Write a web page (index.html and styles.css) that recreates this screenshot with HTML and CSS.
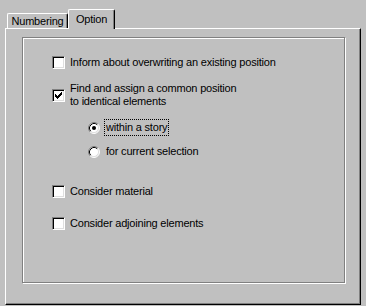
FILE: index.html
```html
<!DOCTYPE html>
<html lang="en">
  <head>
    <meta charset="UTF-8" />
    <title>Option</title>
    <link rel="stylesheet" href="styles.css">
  </head>
  <body>
    <div class="dialog">
      <div class="tabs">
        <div class="tab tab-numbering">Numbering</div>
        <div class="tab tab-active">Option</div>
      </div>

      <div class="panel">
        <div class="group">
          <div class="row row-first">
            <span class="check"></span>
            <span class="label">Inform about overwriting an existing position</span>
          </div>

          <div class="row row-find">
            <span class="check">
              <svg width="11" height="11" viewBox="0 0 11 11" shape-rendering="crispEdges">
                <rect x="2" y="4" width="1" height="3" />
                <rect x="3" y="5" width="1" height="3" />
                <rect x="4" y="6" width="1" height="3" />
                <rect x="5" y="5" width="1" height="3" />
                <rect x="6" y="4" width="1" height="3" />
                <rect x="7" y="3" width="1" height="3" />
                <rect x="8" y="2" width="1" height="3" />
              </svg>
            </span>
            <span class="label">Find and assign a common position<br />to identical elements</span>
          </div>

          <div class="row radio-row radio-first">
            <svg class="radio" width="12" height="12" viewBox="0 0 12 12">
              <circle cx="6" cy="6" r="5" fill="#fff" />
              <path d="M2.11 9.89 A5.5 5.5 0 0 1 9.89 2.11" fill="none" stroke="#808080" />
              <path d="M9.89 2.11 A5.5 5.5 0 0 1 2.11 9.89" fill="none" stroke="#fff" />
              <path d="M2.82 9.18 A4.5 4.5 0 0 1 9.18 2.82" fill="none" stroke="#000" />
              <path d="M9.18 2.82 A4.5 4.5 0 0 1 2.82 9.18" fill="none" stroke="#dfdfdf" />
              <circle cx="6" cy="6" r="2" fill="#000" />
            </svg>
            <span class="label focus">within a story</span>
          </div>

          <div class="row radio-row radio-second">
            <svg class="radio" width="12" height="12" viewBox="0 0 12 12">
              <circle cx="6" cy="6" r="5" fill="#fff" />
              <path d="M2.11 9.89 A5.5 5.5 0 0 1 9.89 2.11" fill="none" stroke="#808080" />
              <path d="M9.89 2.11 A5.5 5.5 0 0 1 2.11 9.89" fill="none" stroke="#fff" />
              <path d="M2.82 9.18 A4.5 4.5 0 0 1 9.18 2.82" fill="none" stroke="#000" />
              <path d="M9.18 2.82 A4.5 4.5 0 0 1 2.82 9.18" fill="none" stroke="#dfdfdf" />
            </svg>
            <span class="label plain">for current selection</span>
          </div>

          <div class="row row-material">
            <span class="check"></span>
            <span class="label">Consider material</span>
          </div>

          <div class="row row-adjoining">
            <span class="check"></span>
            <span class="label">Consider adjoining elements</span>
          </div>
        </div>
      </div>
    </div>
  </body>
</html>
```

FILE: styles.css
```css
* {
  box-sizing: border-box;
  margin: 0;
  padding: 0;
}

body {
  background-color: #c0c0c0;
  color: black;
  font-family: "Liberation Sans", Arial, sans-serif;
  font-size: 11px;
  line-height: 13px;
  letter-spacing: -0.2px;
  width: 366px;
  height: 306px;
  overflow: hidden;
}

.dialog {
  display: flex;
  flex-direction: column;
  height: 306px;
  padding: 9px 5px 1px 5px;
}

.tabs {
  display: flex;
  align-items: flex-end;
  height: 19px;
  padding-left: 2px;
}

.tab {
  height: 15px;
  border-left: 1px solid #fff;
  border-top: 1px solid #fff;
  border-right: 1px solid #000;
  border-top-left-radius: 2px;
  border-top-right-radius: 2px;
  box-shadow: inset -1px 0 #808080;
  text-align: center;
  padding-top: 1px;
}

.tab-numbering {
  width: 61px;
}

.tab-active {
  position: relative;
  z-index: 1;
  width: 47px;
  height: 20px;
  margin-bottom: -1px;
  background-color: #c0c0c0;
  padding-top: 3px;
}

.panel {
  flex: 1;
  display: flex;
  flex-direction: column;
  border: 1px solid;
  border-color: #fff #000 #000 #fff;
  box-shadow: inset -1px -1px #808080;
  padding: 8px 15px 21px 16px;
}

.group {
  flex: 1;
  border: 1px solid #808080;
  box-shadow: inset 1px 1px #fff, 1px 1px #fff;
  padding: 16px 0 0 29px;
}

.row {
  display: flex;
  align-items: center;
  min-height: 17px;
}

.row-find {
  margin-top: 11px;
}

.radio-row {
  padding-left: 36px;
}

.radio-first {
  margin-top: 11px;
}

.radio-second {
  margin-top: 7px;
}

.row-material {
  margin-top: 23px;
}

.row-adjoining {
  margin-top: 15px;
}

.check {
  flex: none;
  width: 13px;
  height: 13px;
  margin-right: 5px;
  background-color: #fff;
  border: 1px solid;
  border-color: #808080 #fff #fff #808080;
  box-shadow: inset 1px 1px #000, inset -1px -1px #dfdfdf;
}

.check svg {
  display: block;
}

.radio {
  flex: none;
  display: block;
  margin-right: 4px;
}

.label {
  white-space: nowrap;
}

.focus {
  border: 1px dotted #000;
  padding: 1px;
}

.plain {
  padding: 2px;
}
```
